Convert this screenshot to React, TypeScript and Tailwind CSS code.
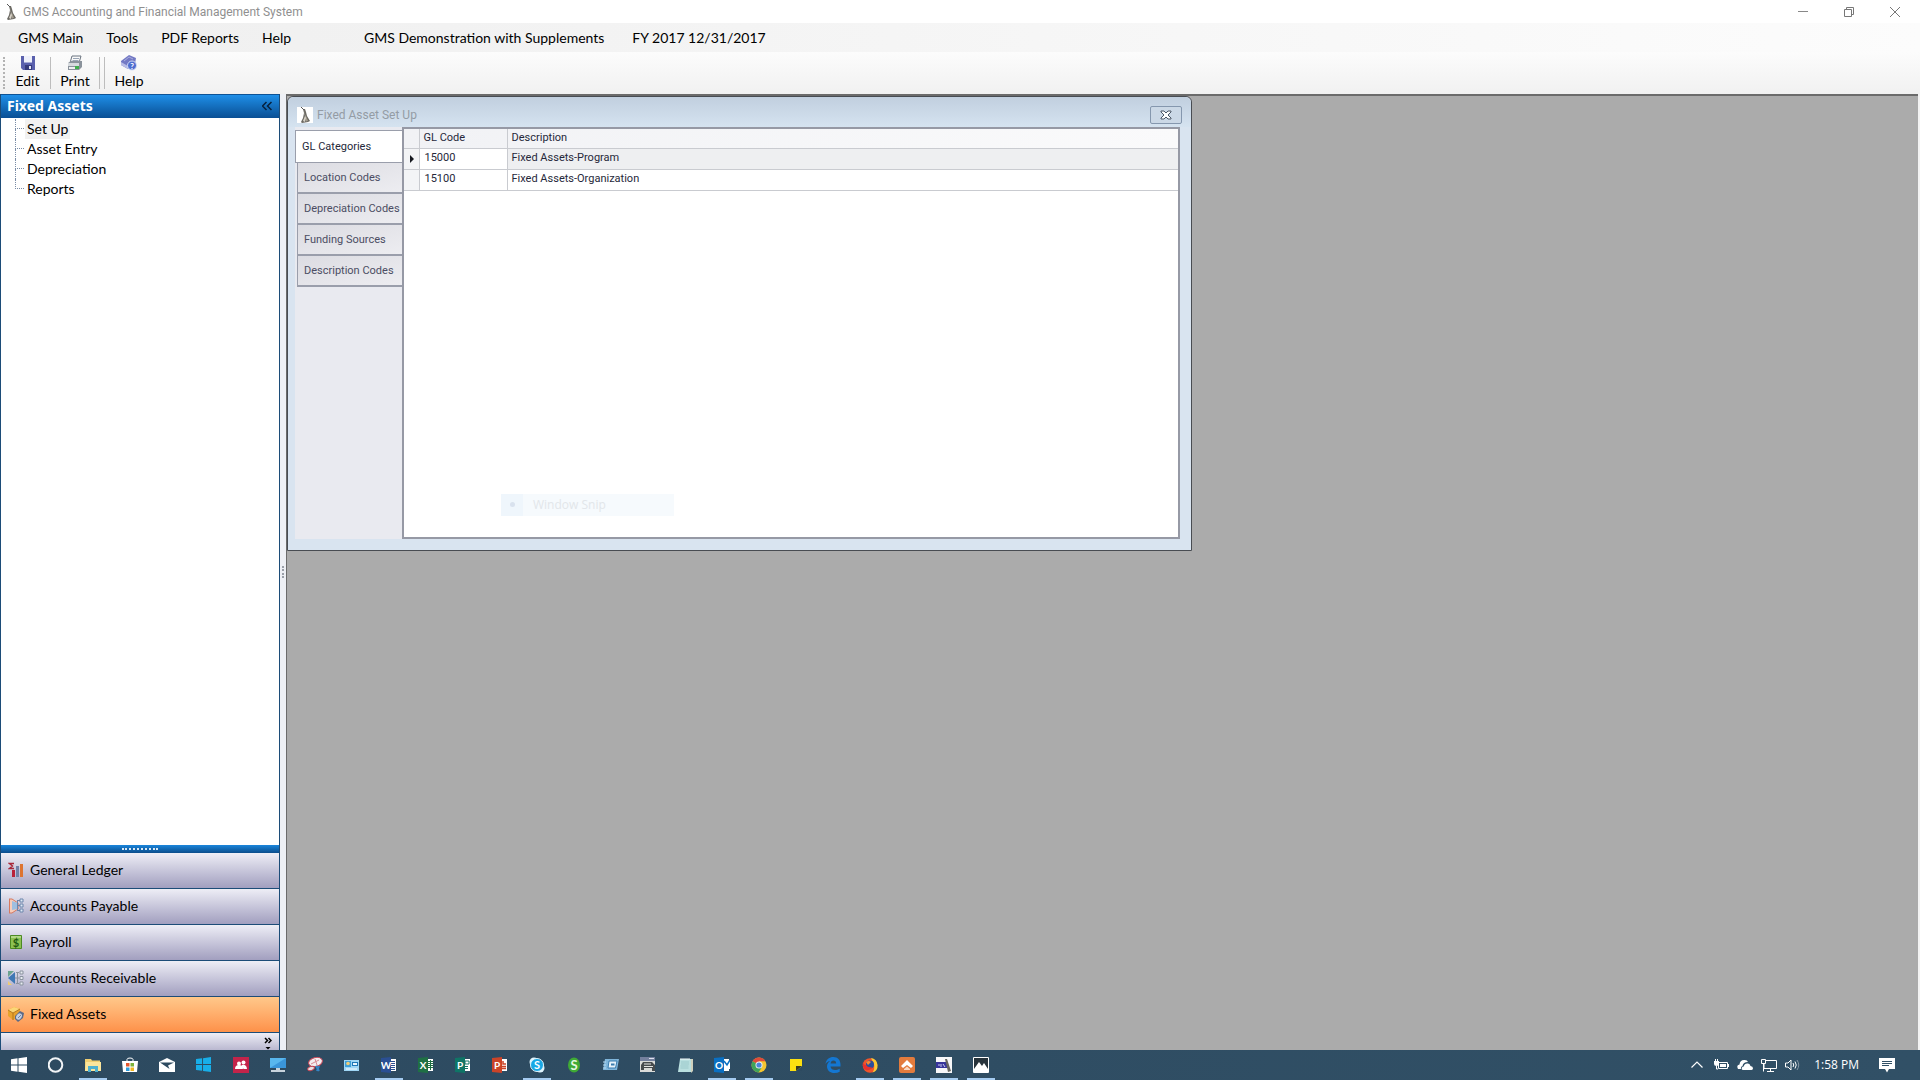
import React from 'react';
import clsx from 'clsx';

const MENU = ['GMS Main', 'Tools', 'PDF Reports', 'Help'];
const TREE = ['Set Up', 'Asset Entry', 'Depreciation', 'Reports'];
const TABS = ['GL Categories', 'Location Codes', 'Depreciation Codes', 'Funding Sources', 'Description Codes'];
const ROWS = [
  { code: '15000', description: 'Fixed Assets-Program' },
  { code: '15100', description: 'Fixed Assets-Organization' },
];

const Svg: React.FC<{ children: React.ReactNode; className?: string }> = ({ children, className = 'size-4' }) => (
  <svg viewBox="0 0 16 16" className={clsx('shrink-0', className)} fill="none" aria-hidden="true">
    {children}
  </svg>
);

const Lighthouse = ({ className }: { className?: string }) => (
  <Svg className={className}>
    <path d="M6 2l2 0 1 3 1 4 3 5-2 1-6 1-1-1 2-4 1-5z" fill="#6b6963" />
    <path d="M7 4l1 5-2 5 2 1 1-4z" fill="#d8d3c8" />
    <path d="M9 9l2 5-2 .5z" fill="#a49d8f" />
    <path d="M4 0l3 3" stroke="#555" />
  </Svg>
);

const SaveIcon = () => (
  <Svg>
    <path d="M1 1h14v14H3l-2-2z" fill="#5a60ad" />
    <path d="M4 1h8v7H4z" fill="#eef0fa" />
    <path d="M4 7h8v1H4z" fill="#a6abd6" />
    <path d="M5 10h7v5H5z" fill="#353a7b" />
    <path d="M9 11h2v3H9z" fill="#e5e7f5" />
  </Svg>
);

const PrintIcon = () => (
  <Svg>
    <path d="M5 1h9l-2 7H3z" fill="#fafafa" stroke="#6b7480" />
    <path d="M6 3.500h6M5.500 5.500h6" stroke="#9aa5b5" />
    <path d="M1 8l3-2h11v6l-3 3H1z" fill="#8a929b" />
    <path d="M1 8h11v3H1z" fill="#d6dade" />
    <path d="M2 12h9v2H2z" fill="#eef0f1" />
    <path d="M8 11h4v3H8z" fill="#3fae4c" />
  </Svg>
);

const HelpIcon = () => (
  <Svg>
    <path d="M0 6l8-6 7 3-1 6-7 5-7-4z" fill="#7379c4" />
    <path d="M0 7l7 4v3L0 10z" fill="#b9bde6" />
    <path d="M3 6l5-4 4 2" stroke="#a9adde" />
    <circle cx="11" cy="10.500" r="4.500" fill="#4f6ed0" stroke="#d3dcf6" />
    <text x="11" y="13.500" fontSize="8" fontWeight="700" textAnchor="middle" fill="#fff">?</text>
  </Svg>
);

const LedgerIcon = () => (
  <Svg>
    <path d="M6 1.500H1.500l3 2.500-3 2.500H6" stroke="#a8283a" strokeWidth="1.400" />
    <path d="M4 8h3v7H4z" fill="#b92238" />
    <path d="M8 4h3v11H8z" fill="#7283a8" />
    <path d="M12 2h3v13h-3z" fill="#dd7430" />
  </Svg>
);

const PayableIcon = () => (
  <Svg>
    <path d="M1.500 1v14M1 1h3l6 4v6l-6 4H1" fill="#f5cdbb" stroke="#d7795f" />
    <path d="M4 3l6 2v6l-6 1z" fill="#9dbfe0" />
    <path d="M9 2.500h3M9 7.500h3M9 12.500h3M9.500 2v11" stroke="#6c86ab" />
    <path d="M12 1h3v3h-3zM12 6h3v3h-3zM12 11h3v3h-3z" fill="#dfe9f5" stroke="#6c86ab" />
  </Svg>
);

const PayrollIcon = () => (
  <Svg>
    <path d="M2.500 1.500h11v13h-11z" fill="#8cc152" stroke="#4c8a24" />
    <path d="M3 3h10" stroke="#d8efb9" />
    <text x="8" y="13" fontSize="11" fontWeight="700" textAnchor="middle" fill="#1f5a12">$</text>
  </Svg>
);

const ReceivableIcon = () => (
  <Svg>
    <path d="M0 1h6L0 7z" fill="#6ba38f" />
    <path d="M0 8l7-6v12z" fill="#3f78b5" />
    <path d="M0 11l4 4H0z" fill="#edcb74" />
    <path d="M8 2.500h3M7 8h4M8 13.500h3M9.500 3v10" stroke="#8a939f" />
    <path d="M12 1h3v3h-3zM12 6.500h3v3h-3zM12 12h3v3h-3z" fill="#e9edf2" stroke="#8a939f" />
  </Svg>
);

const AssetsIcon = () => (
  <Svg>
    <path d="M0 4l6-3 6 2v7l-7 4-5-4z" fill="#e8a32e" />
    <path d="M0 4l6-3 6 2-7 4z" fill="#fbd677" />
    <path d="M5 7v7M0 4l5 3 7-4" stroke="#a86a14" strokeWidth=".8" />
    <path d="M7 10l5-5 4 2-1 5-5 4-3-3z" fill="#5c6b88" />
    <ellipse cx="11" cy="10.500" rx="2.500" ry="3.500" transform="rotate(35 11 10.500)" fill="#c4d0e3" />
    <path d="M10 12l3-3" stroke="#7584a0" />
  </Svg>
);

const MODULES = [
  { label: 'General Ledger', icon: <LedgerIcon /> },
  { label: 'Accounts Payable', icon: <PayableIcon /> },
  { label: 'Payroll', icon: <PayrollIcon /> },
  { label: 'Accounts Receivable', icon: <ReceivableIcon /> },
  { label: 'Fixed Assets', icon: <AssetsIcon />, active: true },
];

/* Office style tile: coloured square with a letter and a white page */
const OfficeIcon = ({ letter, color, children }: { letter: string; color: string; children?: React.ReactNode }) => (
  <Svg>
    <path d="M9 2h6v12H9z" fill="#fff" />
    {children || <path d="M10 4.500h4M10 6.500h4M10 8.500h4M10 10.500h4M10 12.500h4" stroke={color} />}
    <path d="M0 1l10-1v16L0 15z" fill={color} />
    <text x="5" y="12" fontSize="10" fontWeight="700" textAnchor="middle" fill="#fff">{letter}</text>
  </Svg>
);

const windowsPath = 'M0 2.200l6.500-.9v6.200H0zM7.500 1.200L16 0v7.500H7.500zM0 8.500h6.500v6.200L0 13.800zM7.500 8.500H16V16l-8.500-1.200z';

const TASKS: { name: string; open?: boolean; icon: React.ReactNode }[] = [
  { name: 'Start', icon: <Svg><path d={windowsPath} fill="#fff" /></Svg> },
  { name: 'Cortana', icon: <Svg><circle cx="7.500" cy="8" r="6.800" stroke="#f1f4f6" strokeWidth="2" /></Svg> },
  {
    name: 'File Explorer',
    open: true,
    icon: (
      <Svg>
        <path d="M0 2h6l1 1.500h8V14H0z" fill="#f0cf72" />
        <path d="M1 5h15v9H0z" fill="#fbe59c" />
        <path d="M3 9h10v6h-3v-3H6v3H3z" fill="#4fb0cf" />
      </Svg>
    ),
  },
  {
    name: 'Store',
    icon: (
      <Svg>
        <path d="M5 4V2.500Q5 1 8 1t3 1.500V4" stroke="#fff" />
        <path d="M0 4h16l-1 11H1z" fill="#fff" />
        <path d="M4 6h3.500v3.500H4z" fill="#e3562c" />
        <path d="M8.500 6H12v3.500H8.500z" fill="#7db23a" />
        <path d="M4 10.500h3.500V14H4z" fill="#2d9cdb" />
        <path d="M8.500 10.500H12V14H8.500z" fill="#f2b622" />
      </Svg>
    ),
  },
  {
    name: 'Mail',
    icon: (
      <Svg>
        <path d="M0 5l8-4 8 4v10H0z" fill="#fff" />
        <path d="M1 5.500h14l-6 3 1.500 3.500z" fill="#2d4a60" />
      </Svg>
    ),
  },
  { name: 'Windows', icon: <Svg className="size-[15px]"><path d={windowsPath} fill="#18aee8" /></Svg> },
  {
    name: 'People',
    icon: (
      <Svg>
        <path d="M0 0h16v16H0z" fill="#c3244a" />
        <circle cx="6" cy="6.500" r="2" fill="#fff" />
        <circle cx="10.500" cy="5.500" r="2" fill="#fff" />
        <path d="M2 12q0-4 4-4t4 4zM8.500 8q5-1 5.500 4h-3.500z" fill="#fff" />
      </Svg>
    ),
  },
  {
    name: 'This PC',
    icon: (
      <Svg>
        <path d="M0 1h16v10H0z" fill="#58b7ee" />
        <path d="M0 11L16 1v10z" fill="#3a96da" />
        <path d="M6 11h4v2H6zM1 13h14v2H1z" fill="#c7d3dc" />
      </Svg>
    ),
  },
  {
    name: 'Snipping Tool',
    icon: (
      <Svg>
        <ellipse cx="8.500" cy="5" rx="7" ry="4.500" transform="rotate(-15 8.500 5)" fill="#f4eef0" stroke="#c74b5b" />
        <path d="M4 7l8-4M8 2l2 6" stroke="#d98a94" />
        <ellipse cx="4" cy="11.500" rx="3.500" ry="2" transform="rotate(-20 4 11.500)" fill="#e8dfe2" stroke="#c0404e" />
        <path d="M9 9l3 5M12 9l-2 5" stroke="#3584c4" strokeWidth="2" />
      </Svg>
    ),
  },
  {
    name: 'Remote Desktop',
    icon: (
      <Svg>
        <path d="M0 3h15v11H0z" fill="#9fd6f5" />
        <path d="M1 4h6v6H1z" fill="#3f9ed6" />
        <circle cx="4" cy="6.500" r="1.800" fill="#f1cd76" />
        <path d="M8 5h6v4H8z" fill="#1f77b8" />
        <path d="M9 6h4v2H9z" fill="#e8f6fd" />
        <path d="M2 12h11" stroke="#fff" />
      </Svg>
    ),
  },
  { name: 'Word', open: true, icon: <OfficeIcon letter="W" color="#2a4f93" /> },
  {
    name: 'Excel',
    icon: (
      <OfficeIcon letter="X" color="#1f7044">
        <path d="M9 4.500h6M9 6.500h6M9 8.500h6M9 10.500h6M12.500 3v10" stroke="#1f7044" />
      </OfficeIcon>
    ),
  },
  {
    name: 'Publisher',
    icon: (
      <OfficeIcon letter="P" color="#0f7566">
        <path d="M10 4h4v3h-4zM9 9.500h4M9 11.500h4" stroke="#0f7566" />
      </OfficeIcon>
    ),
  },
  {
    name: 'PowerPoint',
    icon: (
      <OfficeIcon letter="P" color="#cb4428">
        <path d="M11 4v3h3M10 9.500h4M10 11.500h4" stroke="#cb4428" strokeWidth="1.500" />
      </OfficeIcon>
    ),
  },
  {
    name: 'Skype',
    open: true,
    icon: (
      <Svg>
        <circle cx="5" cy="5" r="4.500" fill="#dff4fd" />
        <circle cx="11" cy="11" r="4.500" fill="#dff4fd" />
        <circle cx="8" cy="8" r="6.500" fill="#18a8e6" stroke="#dff4fd" />
        <text x="8" y="12" fontSize="11" fontWeight="700" textAnchor="middle" fill="#fff">S</text>
      </Svg>
    ),
  },
  {
    name: 'Sage',
    icon: (
      <Svg>
        <ellipse cx="8" cy="8" rx="6" ry="7.500" fill="#3faa35" />
        <text x="8" y="12.500" fontSize="13" fontWeight="700" textAnchor="middle" fill="#e8f8e0">S</text>
      </Svg>
    ),
  },
  {
    name: 'Run',
    icon: (
      <Svg>
        <path d="M2 2h14l-2 11H0z" fill="#7fb5da" />
        <path d="M6 4h8l-1.500 7H5z" fill="#e9f4fb" stroke="#3b7daf" />
        <path d="M8 7.500h3.500" stroke="#3b7daf" strokeWidth="2" />
        <path d="M0 5h3M0 8h3M0 11h3" stroke="#b9dcf2" />
      </Svg>
    ),
  },
  {
    name: 'Scanner',
    icon: (
      <Svg>
        <path d="M0 0h15v4H0z" fill="#74809e" />
        <path d="M9 1h5v1H9z" fill="#dfe3ee" />
        <path d="M0 4h15v11H0z" fill="#dadbd9" />
        <path d="M1 8l2-3h9l3 3v6h-3v-3H4v2H1z" fill="#474b4d" />
        <path d="M4 7h7M4 9.500h9" stroke="#e4e5e3" />
      </Svg>
    ),
  },
  {
    name: 'Notepad',
    icon: (
      <Svg>
        <path d="M3 2h12l-1 13H1z" fill="#b9dfdf" />
        <path d="M14 2h2v12l-2 2z" fill="#cfd0bd" />
        <path d="M4 1v2M6 1v2M8 1v2M10 1v2M12 1v2" stroke="#f5f9f9" />
        <path d="M4 5h8M4 7h8M3.500 9h8M3.500 11h8" stroke="#86bcc0" strokeWidth=".6" />
      </Svg>
    ),
  },
  {
    name: 'Outlook',
    open: true,
    icon: (
      <OfficeIcon letter="O" color="#0a6fc2">
        <path d="M9 3h7v9H9z" fill="#fff" />
        <path d="M10 4l3 4 3-5" stroke="#0a6fc2" strokeWidth="1.500" />
      </OfficeIcon>
    ),
  },
  {
    name: 'Chrome',
    open: true,
    icon: (
      <Svg>
        <circle cx="8" cy="8" r="7.500" fill="#f4c430" />
        <path d="M8 8L1.500 4.200A7.500 7.500 0 0 1 14.500 4.300H8z" fill="#df4a3a" />
        <path d="M8 8L1.500 4.200A7.500 7.500 0 0 0 7.600 15.500L11 10z" fill="#3fa35a" />
        <circle cx="8" cy="8" r="3.500" fill="#eef2f3" />
        <circle cx="8" cy="8" r="2.600" fill="#4a86d8" />
      </Svg>
    ),
  },
  {
    name: 'Sticky Notes',
    icon: (
      <Svg>
        <path d="M2 2h12v12H2z" fill="#fde010" />
        <path d="M8 9h6l-6 5z" fill="#373a24" />
        <path d="M14 9v5H8z" fill="#2d4a60" />
      </Svg>
    ),
  },
  {
    name: 'Edge',
    icon: (
      <Svg>
        <path
          d="M.500 7C1 2.500 4.500 0 8.300 0 13 0 15.500 3.500 15.500 7.500V9.500H5.500c.2 2.500 2.300 3.500 4.500 3.500 1.800 0 3.200-.5 4.700-1.300v3.100C13.200 15.600 11.500 16 9.500 16 5 16 2 13.300 2 9.500c0-2.300 1.300-4.500 3.200-5.500C3.300 4.200 1.500 5.300.500 7zM5.600 6.600h5.600c0-2-1-3.100-2.700-3.100S5.800 4.800 5.600 6.600z"
          fill="#1477d2"
        />
      </Svg>
    ),
  },
  {
    name: 'Firefox',
    open: true,
    icon: (
      <Svg>
        <circle cx="8" cy="8.500" r="7.300" fill="#f0542a" />
        <path d="M9 1q6 1 6.500 7t-5 7.500Q13 12 12 7z" fill="#fcc935" />
        <circle cx="8" cy="7.500" r="4" fill="#2b4f9e" />
        <path d="M1 4q0 4 3 4 2 3 6 2-2 4-6 3T1 4z" fill="#e8312f" />
        <path d="M4 5q3-2 5 0L6 8z" fill="#f68a31" />
      </Svg>
    ),
  },
  {
    name: 'Home',
    open: true,
    icon: (
      <Svg>
        <rect width="16" height="16" rx="2" fill="#e37b3d" />
        <path d="M8 3l6 6-2 2-4-3-4 3-2-2z" fill="#fff" />
        <path d="M5 12l3-2.500 3 2.500v1H5z" fill="#f9d7c1" />
      </Svg>
    ),
  },
  {
    name: 'GMS',
    open: true,
    icon: (
      <Svg>
        <path d="M0 0h16v16H0z" fill="#f7f7f9" />
        <path d="M0 5h11v6H0z" fill="#37359b" />
        <path d="M2 8h2M5 7v3M7 7l2 3" stroke="#cfcff0" />
        <path d="M9 2l2 0 4 12-3 1z" fill="#67655f" />
      </Svg>
    ),
  },
  {
    name: 'Photos',
    open: true,
    icon: (
      <Svg>
        <path d="M.500.500h15v15H.500z" fill="#27333b" stroke="#fff" />
        <path d="M1 12l5-7 3 4 2-3 4 6v3H1z" fill="#fff" />
      </Svg>
    ),
  },
];

const TitleBar = () => (
  <header className="flex h-[23px] items-center bg-white pr-[2px] text-[#8f8f8f]">
    <Lighthouse className="ml-[3px] size-4" />
    <h1 className="ml-1 font-[Roboto,'Open_Sans',sans-serif] text-[12px]">
      GMS Accounting and Financial Management System
    </h1>
    <div className="ml-auto flex">
      <button aria-label="Minimize" className="flex w-[46px] justify-center">
        <svg viewBox="0 0 10 10" className="size-[10px]" stroke="#888"><path d="M0 4.500h10" /></svg>
      </button>
      <button aria-label="Restore" className="flex w-[46px] justify-center">
        <svg viewBox="0 0 10 10" className="size-[10px]" stroke="#777" fill="none">
          <path d="M.500 2.500h7v7h-7zM2.500 2V.500h7v7H8" />
        </svg>
      </button>
      <button aria-label="Close" className="flex w-[46px] justify-center">
        <svg viewBox="0 0 10 10" className="size-[10px]" stroke="#777"><path d="M0 0l10 10M10 0L0 10" /></svg>
      </button>
    </div>
  </header>
);

const MenuBar = () => (
  <nav className="flex h-[29px] items-center bg-linear-to-r from-[#efefef] to-[#fcfcfc] pl-[18px] text-[14px]">
    <div className="flex w-[346px] gap-[23px]">
      {MENU.map((item) => (
        <button key={item}>{item}</button>
      ))}
    </div>
    <span>GMS Demonstration with Supplements</span>
    <span className="ml-7">FY 2017 12/31/2017</span>
  </nav>
);

const ToolBar = () => (
  <div className="flex h-[42px] items-center bg-linear-to-b from-[#fcfcfc] to-[#f1f1f1] pl-[3px] text-[14px] leading-5">
    <div className="h-8 border-l-2 border-dotted border-[#b3b3b3]" />
    <button className="flex w-[45px] flex-col items-center"><SaveIcon />Edit</button>
    <div className="h-8 border-l border-[#bdbdbd]" />
    <button className="flex w-12 flex-col items-center"><PrintIcon />Print</button>
    <div className="h-8 w-[6px] border-x border-[#bdbdbd]" />
    <button className="flex w-12 flex-col items-center"><HelpIcon />Help</button>
  </div>
);

const Sidebar = () => (
  <aside className="flex w-[280px] shrink-0 flex-col border-x border-[#1c4c78] bg-white">
    <div className="flex h-6 items-center justify-between border-t border-[#0e5396] bg-linear-to-b from-[#1f8fe8] to-[#0a4f94] pr-[7px] pb-[2px] pl-[6px]">
      <h2 className="font-['Noto_Sans',sans-serif] text-[14px] leading-5 font-bold text-white">Fixed Assets</h2>
      <button aria-label="Collapse">
        <svg viewBox="0 0 10 10" className="size-[10px]" stroke="#06203c" strokeWidth="1.500" fill="none">
          <path d="M4.500 1l-4 4 4 4M9.500 1l-4 4 4 4" />
        </svg>
      </button>
    </div>

    {/* Tree */}
    <ul className="flex-1 pt-px pl-[14px] text-[14px] leading-5">
      {TREE.map((item, i) => (
        <li key={item} className="flex">
          <span className="w-[9px]">
            <span className="block h-[10px] border-b border-l border-dotted border-[#7a8ca5]" />
            {i < TREE.length - 1 && <span className="block h-[10px] border-l border-dotted border-[#7a8ca5]" />}
          </span>
          <button className={clsx('ml-px px-[2px]', i === 0 && 'bg-[#f1f1f1]')}>{item}</button>
        </li>
      ))}
    </ul>

    {/* Splitter grip */}
    <div className="flex h-2 items-center justify-center bg-linear-to-b from-[#1a86dc] to-[#0b4d8c]">
      <div className="w-9 border-t-2 border-dotted border-[#d9e8f5]" />
    </div>

    {MODULES.map((m) => (
      <button
        key={m.label}
        className={clsx(
          'flex h-9 items-center gap-[6px] border-b border-[#1c4c78] bg-linear-to-b pb-[2px] pl-[7px] text-[14px]',
          m.active ? 'from-[#ffc88a] to-[#fd9149]' : 'from-[#eeeef6] to-[#a29fbf]',
        )}
      >
        {m.icon}
        {m.label}
      </button>
    ))}
    <div className="flex h-[17px] justify-end bg-linear-to-b from-[#eeeef6] to-[#bab8d0] pt-1 pr-[7px]">
      <button aria-label="Configure buttons">
        <svg viewBox="0 0 8 13" className="h-[13px] w-2" fill="none">
          <path d="M1 1l2.500 2.500L1 6M4.500 1L7 3.500 4.500 6" stroke="#000" strokeWidth="1.500" />
          <path d="M1.500 10h5L4 12.500z" fill="#000" />
        </svg>
      </button>
    </div>
  </aside>
);

const AssetWindow = () => (
  <section className="flex h-[455px] w-[905px] flex-col rounded-t-md border border-[#484c52] bg-[#d9e4f0] pr-[11px] pb-[11px] pl-[7px] font-[Roboto,'Noto_Sans',sans-serif]">
    <div className="-mr-[11px] -ml-[7px] flex h-[30px] items-center rounded-t-md bg-linear-to-b from-[#c1cfdf] to-[#d5e3f0] pt-[6px] pr-[9px] pl-[9px]">
      <span className="bg-white"><Lighthouse className="size-4" /></span>
      <h2 className="ml-1 text-[12px] text-[#949ca5]">Fixed Asset Set Up</h2>
      <button
        aria-label="Close window"
        className="ml-auto flex h-[18px] w-8 items-center justify-center rounded-xs border border-[#8597ae] bg-[#cbd8e6]"
      >
        <svg viewBox="0 0 12 10" className="h-[10px] w-3" fill="#fff" stroke="#4b5766">
          <path d="M1 1h3l2 2 2-2h3v1L8 5l3 3v1H8L6 7 4 9H1V8l3-3-3-3z" />
        </svg>
      </button>
    </div>

    <div className="flex flex-1">
      <div role="tablist" className="flex w-[107px] flex-col items-end bg-[#e9eaf0] pt-[3px] text-[11px]">
        {TABS.map((tab, i) => (
          <button
            key={tab}
            role="tab"
            aria-selected={i === 0}
            className={clsx(
              'border border-r-0 pt-px pl-[6px] text-left whitespace-nowrap',
              i === 0
                ? 'h-[33px] w-full border-[#9a9eab] bg-white text-[#26283a]'
                : 'h-[31px] w-[105px] border-t-0 border-b-2 border-[#9a9eab] bg-linear-to-br from-[#dcdce2] to-[#ededf1] text-[#4b4d63]',
            )}
          >
            {tab}
          </button>
        ))}
      </div>

      <div className="flex-1 border-2 border-[#9699a5] bg-white">
        <table className="w-full table-fixed border-collapse text-left text-[11px] text-[#26283a]">
          <thead>
            <tr className="h-[19px] border-b border-[#c9cbd0] bg-linear-to-r from-[#f1f2f5] to-[#fafafb]">
              <th className="w-[15px] border-r border-[#c9cbd0]" aria-label="Selected" />
              <th className="w-[88px] border-r border-[#c9cbd0] px-1 font-normal">GL Code</th>
              <th className="px-1 font-normal">Description</th>
            </tr>
          </thead>
          <tbody>
            {ROWS.map((row, i) => (
              <tr key={row.code} className="h-[21px] border-b border-[#c9cbd0]">
                <td className="border-r border-[#c9cbd0] bg-[#f3f4f6] pl-[6px]">
                  {i === 0 && (
                    <svg viewBox="0 0 4 8" className="h-2 w-1" fill="#16181f"><path d="M0 0l4 4-4 4z" /></svg>
                  )}
                </td>
                <td className="border-r border-[#c9cbd0] px-[5px]">{row.code}</td>
                <td className={clsx('px-1', i === 0 && 'bg-[#eeeff1]')}>{row.description}</td>
              </tr>
            ))}
          </tbody>
        </table>
        {/* Fading menu entry */}
        <div className="mt-[303px] ml-[97px] flex h-[22px] w-[173px] items-center bg-[#f6fafd] font-['Open_Sans',sans-serif] text-[12px] text-[#e2e6ea]">
          <span className="flex h-full w-[22px] items-center justify-center bg-[#eff6fc]">
            <span className="size-[5px] rounded-full bg-[#d9e2ee]" />
          </span>
          <span className="ml-[10px]">Window Snip</span>
        </div>
      </div>
    </div>
  </section>
);

const Tray = () => (
  <div className="ml-auto flex items-center gap-2 pr-[25px] text-white">
    <button aria-label="Show hidden icons">
      <Svg><path d="M2.500 10.500L8 5l5.500 5.500" stroke="#fff" strokeWidth="1.200" /></Svg>
    </button>
    <Svg>
      <path d="M5.500 5.500h9v6h-9z" stroke="#fff" />
      <path d="M7 7h6v3H7zM15 7h1v3h-1z" fill="#fff" />
      <path d="M1 4h5v3q0 2-2.500 2T1 7zM2 2h1v2H2zM4 2h1v2H4z" fill="#fff" />
      <path d="M3.500 9v3H5" stroke="#fff" />
    </Svg>
    <Svg>
      <path d="M1 12Q-1 8 2.500 7.500 3 3 7 3q3-.5 4 2-5 0-5.500 4-2 .5-1.500 3z" fill="#fff" />
      <path d="M6 13q-2-.5-1-2.500 .5-1 1.700-1Q7.500 6 11 6.500q2 .3 2.500 2.500 2.500.5 2.500 2.200T14.500 13z" fill="#fff" />
    </Svg>
    <Svg>
      <path d="M5 3.500h10.500v8H3V7M9.500 12v3M6 14.500h7" stroke="#fff" />
      <path d="M.500 2.500h4v4h-4zM2.500 6.500v8" stroke="#fff" />
    </Svg>
    <Svg>
      <path d="M.500 6h2.500l3-3v10l-3-3H.500z" stroke="#fff" />
      <path d="M8 6q1.500 2 0 4M10 4.500q2.500 3.500 0 7" stroke="#fff" />
      <path d="M12 3q3.500 5 0 10" stroke="#8496a5" />
    </Svg>
    <time className="ml-[5px] font-['Open_Sans',sans-serif] text-[12px]">1:58 PM</time>
    <button aria-label="Notifications" className="ml-3">
      <Svg>
        <path d="M0 1h16v11h-6l-2 3.500L6 12H0z" fill="#fff" />
        <path d="M3 4.500h10M3 6.500h10M3 8.500h7" stroke="#315066" />
      </Svg>
    </button>
  </div>
);

const TaskBar = () => (
  <footer className="flex h-[30px] bg-linear-to-r from-[#2d4a60] to-[#315066]">
    {TASKS.map((task) => (
      <button
        key={task.name}
        aria-label={task.name}
        className="flex w-[37px] flex-col items-center justify-between pt-[7px]"
      >
        {task.icon}
        {task.open && <span className="h-[2px] w-7 bg-[#a5cbf0]" />}
      </button>
    ))}
    <Tray />
  </footer>
);

export default function App() {
  return (
    <div className="flex h-screen flex-col overflow-hidden bg-white font-[Lato,'Noto_Sans',sans-serif] text-black">
      <TitleBar />
      <MenuBar />
      <ToolBar />
      <div className="flex min-h-0 flex-1">
        <Sidebar />
        <div className="flex w-[6px] items-center justify-center bg-[#eef0f5]">
          <div className="h-3 border-l-2 border-dotted border-[#9a9fa8]" />
        </div>
        <main className="flex-1 border-t-2 border-l border-[#6b6b6b] bg-[#ababab]">
          <AssetWindow />
        </main>
        <div className="w-[2px] bg-[#f3f3f3]" />
      </div>
      <TaskBar />
    </div>
  );
}
